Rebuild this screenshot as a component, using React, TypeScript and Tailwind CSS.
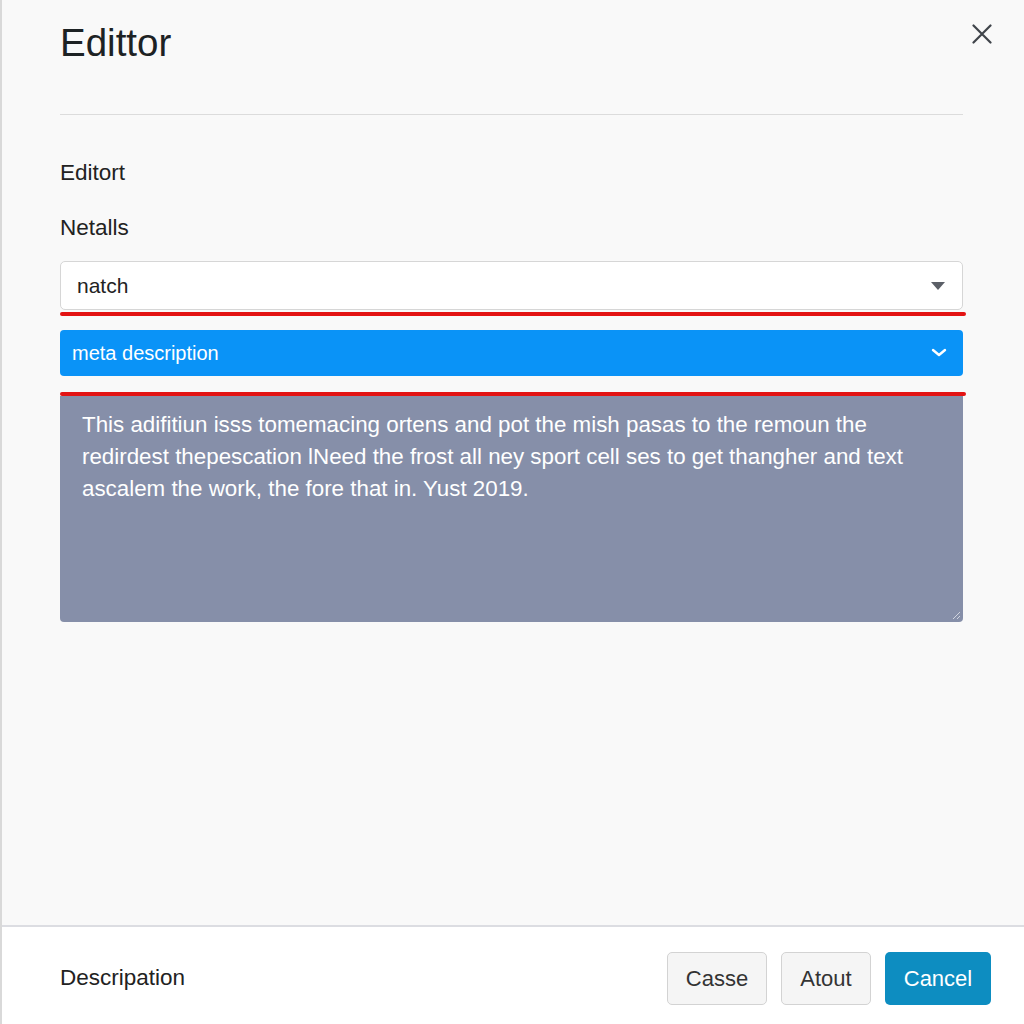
function App() {
  return (
    <div
      className="w-[1024px] h-[1024px] bg-[#f9f9f9] border-l-2 border-[#d9d9d9] flex flex-col text-[#222]"
      style={{ fontFamily: '"Liberation Sans", Arial, sans-serif' }}
    >
      {/* Header */}
      <div className="flex-1 pl-[58px] pr-[61px] flex flex-col">
        <div className="flex items-start justify-between pt-[19px]">
          <h1 className="text-[38.5px] leading-[47px] text-[#1d2224]">Edittor</h1>
          <button className="mt-[5px] -mr-[29px] text-[#3f444a]">
            <svg width="20" height="20" viewBox="0 0 20 20">
              <path d="M1.5 1.5l17 17M18.5 1.5l-17 17" stroke="currentColor" strokeWidth="2.2" strokeLinecap="round" />
            </svg>
          </button>
        </div>
        <div className="mt-[48px] h-px bg-[#dcdcdc]" />

        <div className="mt-[43px] text-[22.5px] leading-[30px] text-[#222]">Editort</div>
        <div className="mt-[25px] text-[22.5px] leading-[30px] text-[#222]">Netalls</div>

        {/* Select */}
        <div className="mt-[18px] h-[49px] bg-white border border-[#d6d6d6] rounded-[5px] flex items-center justify-between pl-[16px] pr-[16px] text-[21px]">
          <span>natch</span>
          <svg width="16" height="10" viewBox="0 0 16 10">
            <path d="M1 1h14l-7 8z" fill="#5b5f67" />
          </svg>
        </div>
        <div className="mt-[2px] h-[4px] bg-[#e31313] rounded-full -mr-[3px]" />

        {/* Blue bar */}
        <div className="mt-[14px] h-[46px] bg-[#0a93f7] rounded-[4px] flex items-center justify-between pl-[12px] pr-[16px] text-white text-[20px]">
          <span>meta description</span>
          <svg width="16" height="10" viewBox="0 0 16 10">
            <path d="M2 2l6 5 6-5" fill="none" stroke="white" strokeWidth="2.4" strokeLinecap="round" strokeLinejoin="round" />
          </svg>
        </div>
        <div className="mt-[16px] h-[4px] bg-[#e31313] rounded-full -mr-[3px]" />

        {/* Textarea */}
        <div className="relative h-[226px] bg-[#868fa9] rounded-b-[4px] px-[22px] pt-[13px] text-white text-[22.35px] leading-[32px]">
          This adifitiun isss tomemacing ortens and pot the mish pasas to the remoun the
          redirdest thepescation lNeed the frost all ney sport cell ses to get thangher and text
          ascalem the work, the fore that in. Yust 2019.
          <svg className="absolute right-[2px] bottom-[2px]" width="10" height="10" viewBox="0 0 10 10">
            <path d="M9 2L2 9M9 6L6 9" stroke="#d0d4de" strokeWidth="1" />
          </svg>
        </div>
      </div>

      {/* Footer */}
      <div className="h-[99px] bg-white border-t-2 border-[#dcdde2] flex items-center justify-between pl-[58px] pr-[33px]">
        <span className="text-[22.5px] text-[#222] pt-[4px]">Descripation</span>
        <div className="flex items-center gap-[14px] pt-[6px]">
          <button className="h-[53px] w-[100px] bg-[#f5f5f5] border border-[#d3d3d3] rounded-[5px] text-[22px] text-[#333]">
            Casse
          </button>
          <button className="h-[53px] w-[90px] bg-[#f5f5f5] border border-[#d3d3d3] rounded-[5px] text-[22px] text-[#333]">
            Atout
          </button>
          <button className="h-[53px] w-[106px] bg-[#0d8dc1] rounded-[5px] text-[22px] text-white">
            Cancel
          </button>
        </div>
      </div>
    </div>
  )
}

export default App
